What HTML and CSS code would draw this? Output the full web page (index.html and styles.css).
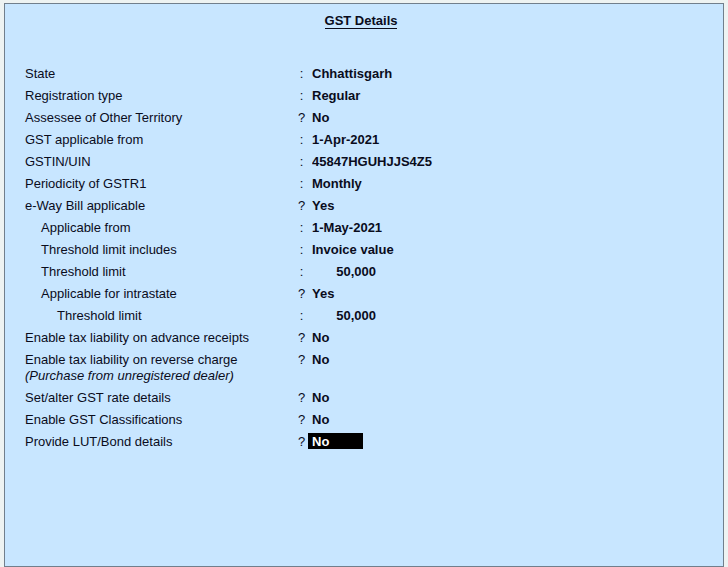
FILE: index.html
```html
<!DOCTYPE html>
<html lang="en">
<head>
<meta charset="utf-8">
<meta name="viewport" content="width=device-width, initial-scale=1">
<title>GST Details</title>
<link rel="stylesheet" href="styles.css">
</head>
<body>
<form class="panel">
  <h1 class="title">GST Details</h1>
  <div class="row"><label for="state">State</label><span class="mark">:</span><input id="state" value="Chhattisgarh"></div>
  <div class="row"><label for="regtype">Registration type</label><span class="mark">:</span><input id="regtype" value="Regular"></div>
  <div class="row"><label for="territory">Assessee of Other Territory</label><span class="mark">?</span><input id="territory" value="No"></div>
  <div class="row"><label for="gstfrom">GST applicable from</label><span class="mark">:</span><input id="gstfrom" value="1-Apr-2021"></div>
  <div class="row"><label for="gstin">GSTIN/UIN</label><span class="mark">:</span><input id="gstin" value="45847HGUHJJS4Z5"></div>
  <div class="row"><label for="period">Periodicity of GSTR1</label><span class="mark">:</span><input id="period" value="Monthly"></div>
  <div class="row"><label for="eway">e-Way Bill applicable</label><span class="mark">?</span><input id="eway" value="Yes"></div>
  <div class="row"><label class="sub" for="ewayfrom">Applicable from</label><span class="mark">:</span><input id="ewayfrom" value="1-May-2021"></div>
  <div class="row"><label class="sub" for="includes">Threshold limit includes</label><span class="mark">:</span><input id="includes" value="Invoice value"></div>
  <div class="row"><label class="sub" for="limit">Threshold limit</label><span class="mark">:</span><input class="amount" id="limit" value="50,000"></div>
  <div class="row"><label class="sub" for="intra">Applicable for intrastate</label><span class="mark">?</span><input id="intra" value="Yes"></div>
  <div class="row"><label class="subsub" for="intralimit">Threshold limit</label><span class="mark">:</span><input class="amount" id="intralimit" value="50,000"></div>
  <div class="row"><label for="advance">Enable tax liability on advance receipts</label><span class="mark">?</span><input id="advance" value="No"></div>
  <div class="row"><label for="reverse">Enable tax liability on reverse charge<em class="note">(Purchase from unregistered dealer)</em></label><span class="mark">?</span><input id="reverse" value="No"></div>
  <div class="row"><label for="rate">Set/alter GST rate details</label><span class="mark">?</span><input id="rate" value="No"></div>
  <div class="row"><label for="classes">Enable GST Classifications</label><span class="mark">?</span><input id="classes" value="No"></div>
  <div class="row"><label for="lut">Provide LUT/Bond details</label><span class="mark">?</span><input class="active" id="lut" value="No"></div>
</form>
</body>
</html>
```
FILE: styles.css
```css
* {
  box-sizing: border-box;
}

body {
  display: flex;
  min-height: 100vh;
  margin: 0;
  padding: 3px 4px 0;
  background: #eef3f2;
  color: #0a0c1c;
  font: 13px/16px "Liberation Sans", Arial, sans-serif;
}

.panel {
  flex: 1;
  padding: 9px 26px 8px 20px;
  border: 1px solid #717f8c;
  background: #c8e6ff;
}

.title {
  width: fit-content;
  margin: 0 auto 33px;
  border-bottom: 1px solid #0a0c1c;
  font-size: 13px;
  line-height: 15px;
}

.row {
  display: grid;
  grid-template-columns: 270px 13px 1fr;
  align-items: start;
  padding: 4px 0 2px;
}

.sub {
  padding-left: 16px;
}

.subsub {
  padding-left: 32px;
}

.note {
  display: block;
}

.mark {
  text-align: center;
}

input {
  width: 100%;
  height: 16px;
  margin-top: -1px;
  padding: 1px 4px 0;
  border: 0;
  outline: 0;
  background: transparent;
  color: inherit;
  font: bold 13px/15px "Liberation Sans", Arial, sans-serif;
}

.amount {
  width: 72px;
  text-align: right;
}

.active {
  width: 55px;
  background: #000;
  color: #fff;
}
```
